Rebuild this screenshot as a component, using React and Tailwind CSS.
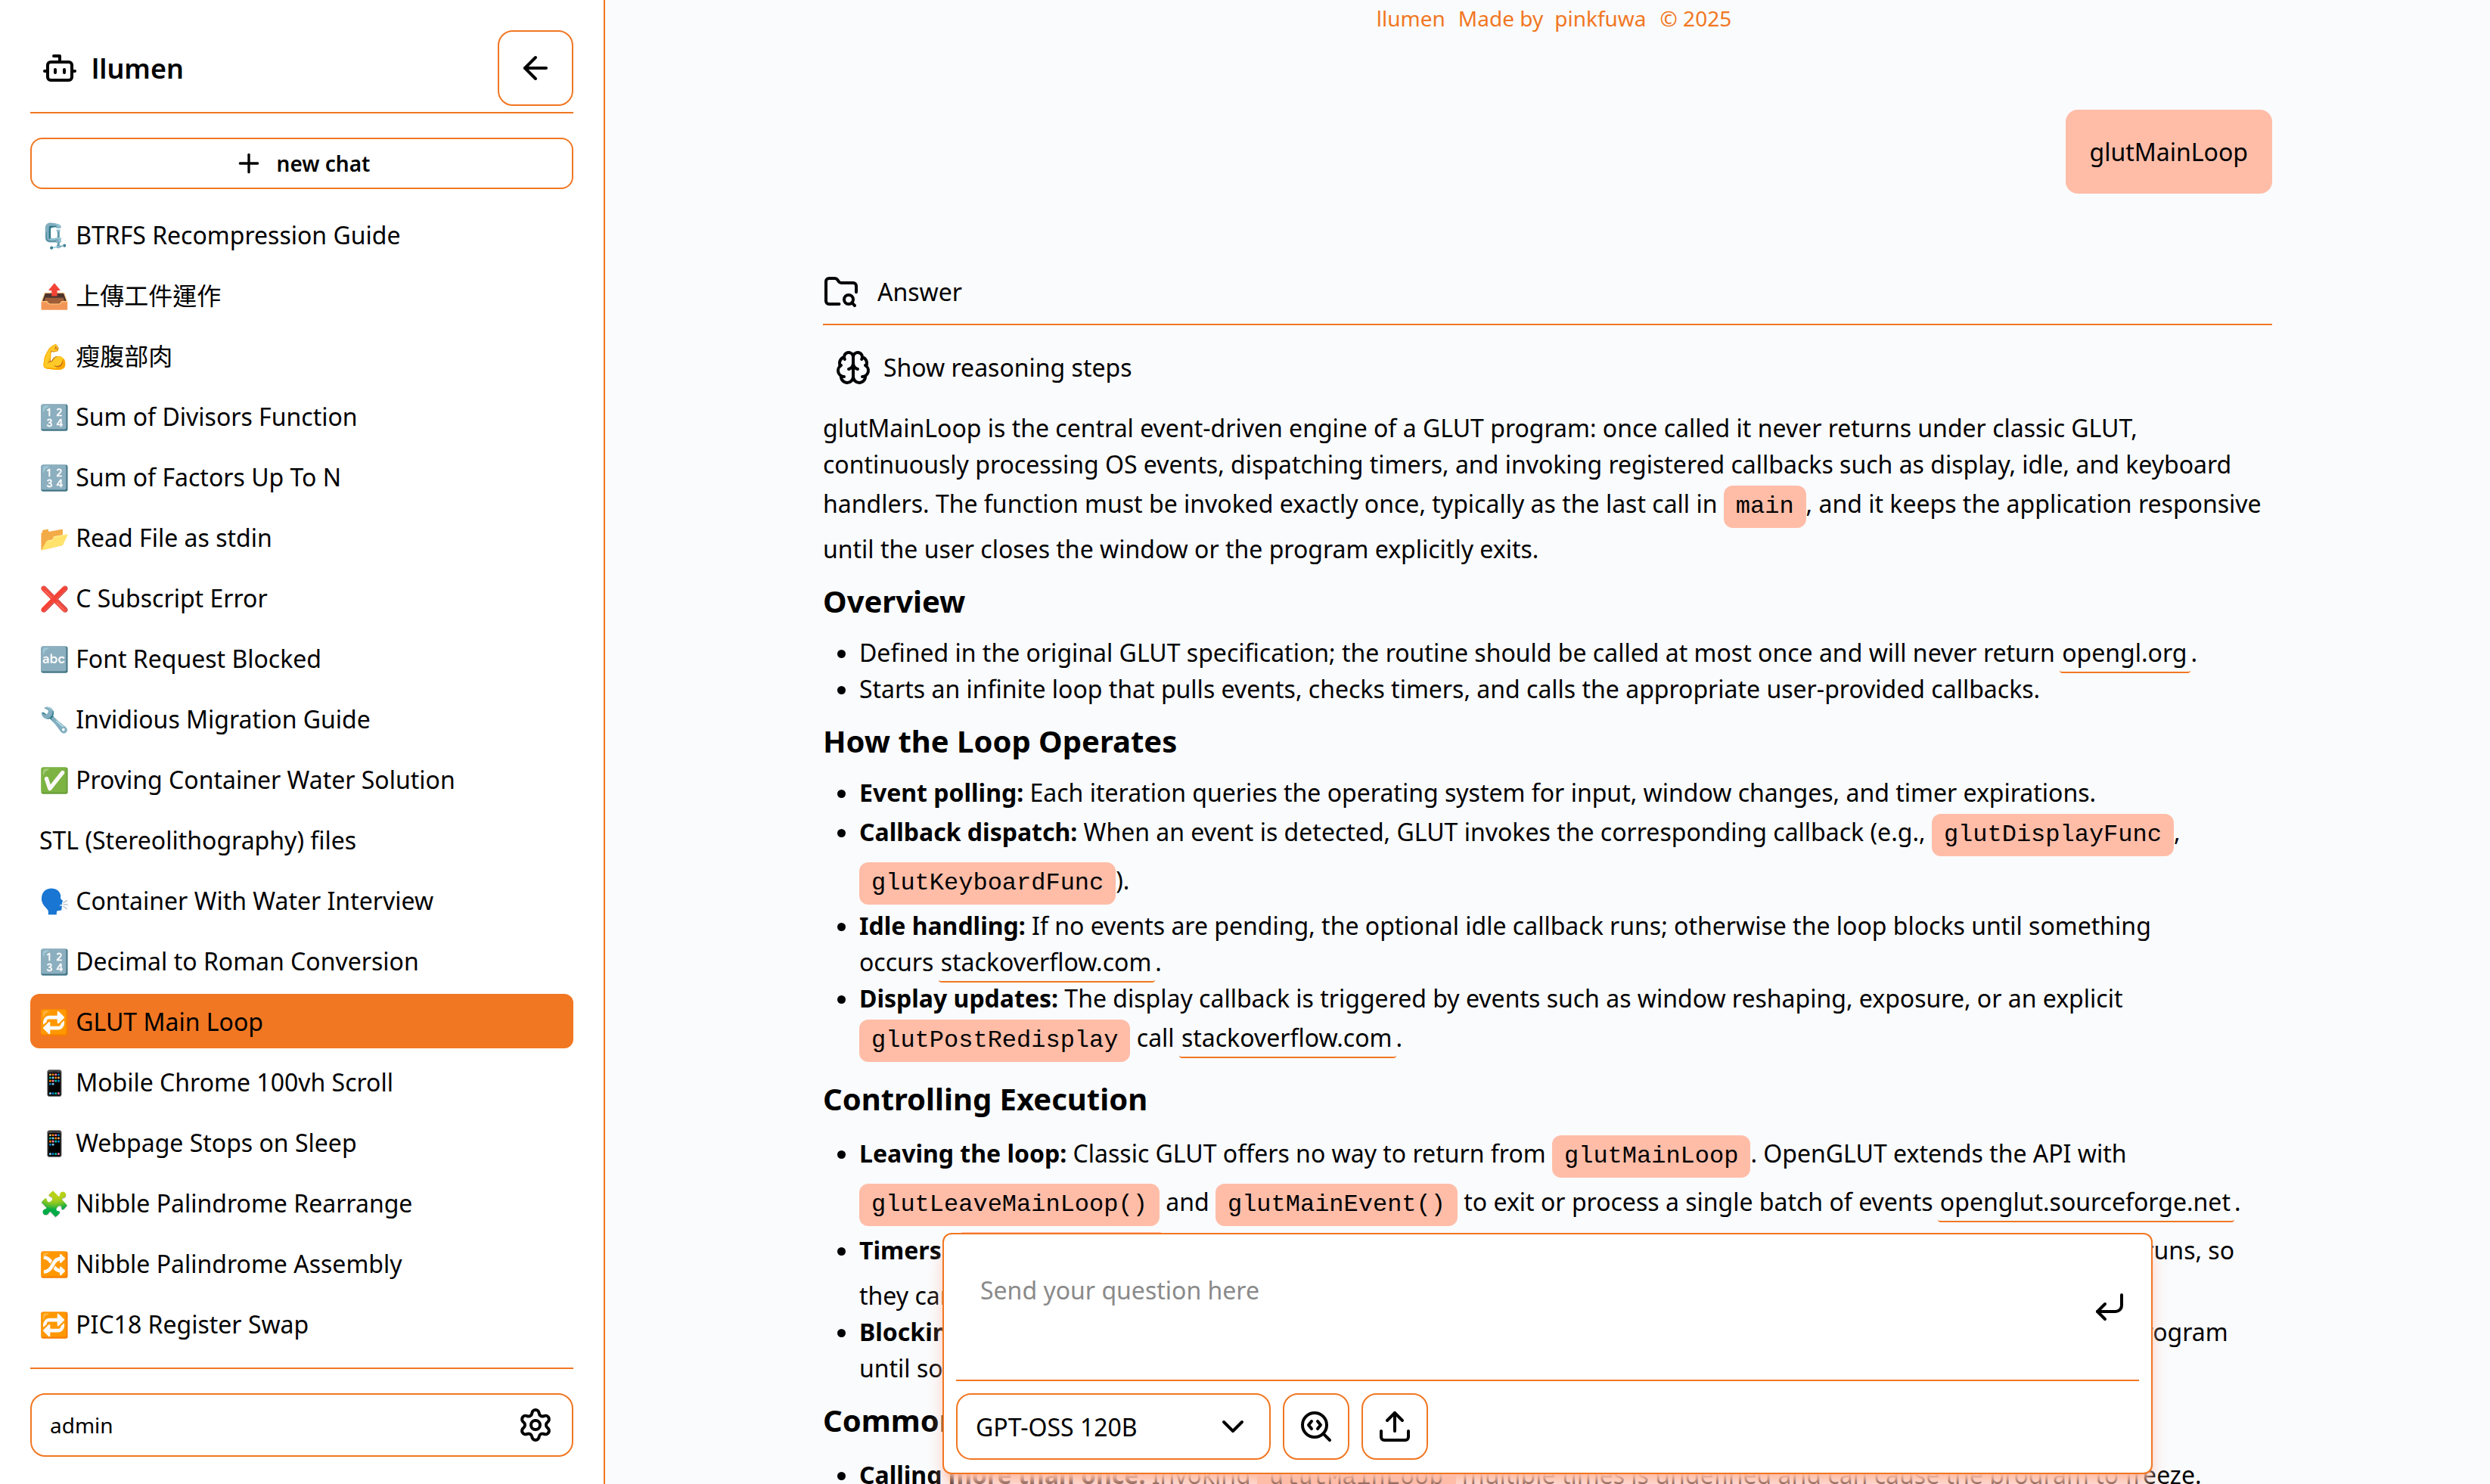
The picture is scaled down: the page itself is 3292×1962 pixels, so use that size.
import React from "react";
import { Bot, ArrowLeft, Plus, Settings, FolderSearch, Brain, CornerDownLeft, ChevronDown, SearchCode, Upload } from "lucide-react";

const chats = [
  ["🗜️", "BTRFS Recompression Guide"],
  ["📤", "上傳工件運作"],
  ["💪", "瘦腹部肉"],
  ["🔢", "Sum of Divisors Function"],
  ["🔢", "Sum of Factors Up To N"],
  ["📂", "Read File as stdin"],
  ["❌", "C Subscript Error"],
  ["🔤", "Font Request Blocked"],
  ["🔧", "Invidious Migration Guide"],
  ["✅", "Proving Container Water Solution"],
  ["", "STL (Stereolithography) files"],
  ["🗣️", "Container With Water Interview"],
  ["🔢", "Decimal to Roman Conversion"],
  ["🔁", "GLUT Main Loop", true],
  ["📱", "Mobile Chrome 100vh Scroll"],
  ["📱", "Webpage Stops on Sleep"],
  ["🧩", "Nibble Palindrome Rearrange"],
  ["🔀", "Nibble Palindrome Assembly"],
  ["🔁", "PIC18 Register Swap"],
];

function Code({ children }) {
  return <code className="my-1 inline-block rounded-xl bg-[#ffbda8] px-4 py-1 font-['Liberation_Mono',monospace] text-[32px] leading-[48px]">{children}</code>;
}
function Link({ children }) {
  return <a className="-ml-[2px] rounded-b-sm border-b-2 border-[#f17722] pb-1 pl-[3px] pr-[5px]">{children}</a>;
}
function H({ children }) {
  return <h2 className="mt-[15px] mb-[14px] text-[40px] leading-[60px] font-bold">{children}</h2>;
}
function B({ children }) {
  return <strong className="font-bold">{children}</strong>;
}

export default function App() {
  return (
    <div className="flex h-[1962px] w-[3292px] overflow-hidden bg-[#fafbfd] text-[32px] leading-[48px] text-black font-['Noto_Sans','Noto_Sans_CJK_TC','Noto_Color_Emoji',sans-serif]">
      <aside className="flex w-[800px] shrink-0 flex-col border-r-2 border-[#f17722] bg-white px-10 pt-10">
        <div className="flex h-[110px] shrink-0 items-start justify-between border-b-2 border-[#f17722]">
          <div className="flex h-[100px] items-center gap-[18px] pl-[15px]">
            <Bot size={48} />
            <span className="pt-[1px] text-[36px] font-semibold">llumen</span>
          </div>
          <button className="flex size-[100px] items-center justify-center rounded-[20px] border-2 border-[#f17722]">
            <ArrowLeft size={48} />
          </button>
        </div>
        <button className="mt-8 flex h-[68px] shrink-0 items-center justify-center gap-[17px] rounded-2xl border-2 border-[#f17722] text-[28px] font-semibold">
          <Plus size={40} />
          <span>new chat</span>
        </button>
        <ul className="mt-6 flex flex-1 flex-col gap-2">
          {chats.map(([e, t, a], i) => (
            <li key={i} className={"flex h-[72px] items-center rounded-xl px-3 pt-[2px] whitespace-pre " + (a ? "bg-[#f17722]" : "")}>
              {e ? e + " " : ""}{t}
            </li>
          ))}
        </ul>
        <div className="mb-[36px] border-t-2 border-[#f17722] pt-8">
          <div className="flex h-[84px] items-center justify-between rounded-[20px] border-2 border-[#f17722] pl-6 pr-6 text-[28px]">
            <span>admin</span>
            <Settings size={48} />
          </div>
        </div>
      </aside>
      <main className="relative min-w-0 flex-1">
        <p className="flex h-[48px] justify-center pl-[17px] pt-1 text-[28px] leading-[40px] text-[#f17722]">
          <span>llumen</span>
          <span className="ml-[17px]">Made by</span>
          <span className="ml-[15px]">pinkfuwa</span>
          <span className="ml-[18px]">© 2025</span>
        </p>
        <div className="mx-auto w-[1916px]">
          <div className="mt-[97px] flex justify-end">
            <div className="flex h-[111px] items-center rounded-2xl bg-[#ffbda8] px-8">glutMainLoop</div>
          </div>
          <div className="mt-[88px] flex h-[86px] items-center gap-6 border-b-2 border-[#f17722]">
            <FolderSearch size={48} />
            <span>Answer</span>
          </div>
          <div className="flex h-[112px] items-center gap-4 pl-4">
            <Brain size={48} />
            <span>Show reasoning steps</span>
          </div>
          <p>glutMainLoop is the central event-driven engine of a GLUT program: once called it never returns under classic GLUT, continuously processing OS events, dispatching timers, and invoking registered callbacks such as display, idle, and keyboard handlers. The function must be invoked exactly once, typically as the last call in <Code>main</Code>, and it keeps the application responsive until the user closes the window or the program explicitly exits.</p>
          <H>Overview</H>
          <ul className="ml-12 list-disc">
            <li>Defined in the original GLUT specification; the routine should be called at most once and will never return <Link>opengl.org</Link>.</li>
            <li>Starts an infinite loop that pulls events, checks timers, and calls the appropriate user-provided callbacks.</li>
          </ul>
          <H>How the Loop Operates</H>
          <ul className="ml-12 list-disc">
            <li><B>Event polling:</B> Each iteration queries the operating system for input, window changes, and timer expirations.</li>
            <li><B>Callback dispatch:</B> When an event is detected, GLUT invokes the corresponding callback (e.g., <Code>glutDisplayFunc</Code>, <Code>glutKeyboardFunc</Code>).</li>
            <li><B>Idle handling:</B> If no events are pending, the optional idle callback runs; otherwise the loop blocks until something<br />occurs <Link>stackoverflow.com</Link>.</li>
            <li><B>Display updates:</B> The display callback is triggered by events such as window reshaping, exposure, or an explicit <Code>glutPostRedisplay</Code> call <Link>stackoverflow.com</Link>.</li>
          </ul>
          <H>Controlling Execution</H>
          <ul className="ml-12 list-disc">
            <li><B>Leaving the loop:</B> Classic GLUT offers no way to return from <Code>glutMainLoop</Code>. OpenGLUT extends the API with <Code>glutLeaveMainLoop()</Code> and <Code>glutMainEvent()</Code> to exit or process a single batch of events <Link>openglut.sourceforge.net</Link>.</li>
            <li><B>Timers:</B> <Code>glutTimerFunc</Code> callbacks are always dispatched from inside the main event loop and only fire while it runs, so<br />they cannot be relied on once the loop has been left.</li>
            <li><B>Blocking:</B> Any long-running or otherwise blocking callback stalls all event and window processing for the whole program<br />until something returns control to the loop.</li>
          </ul>
          <H>Common Pitfalls</H>
          <ul className="ml-12 list-disc">
            <li><B>Calling more than once:</B> Invoking <Code>glutMainLoop</Code> multiple times is undefined and can cause the program to freeze.</li>
          </ul>
        </div>
        <div className="absolute left-[446px] top-[1630px] h-[319px] w-[1600px] rounded-xl border-2 border-[#f17722] bg-white px-4 shadow-xl shadow-[#ffbda8]">
          <div className="relative h-[194px] border-b-2 border-[#f17722] pl-8 pt-[50px] text-[#8a8a8a]">
            Send your question here
            <CornerDownLeft className="absolute right-[15px] top-[72px] text-black" size={48} />
          </div>
          <div className="mt-4 flex gap-4">
            <div className="flex h-[88px] w-[416px] items-center justify-between rounded-[20px] border-2 border-[#f17722] pl-6 pr-6">
              <span className="pt-[2px]">GPT-OSS 120B</span>
              <ChevronDown size={48} />
            </div>
            <button className="flex size-[88px] items-center justify-center rounded-[20px] border-2 border-[#f17722]"><SearchCode size={48} /></button>
            <button className="flex size-[88px] items-center justify-center rounded-[20px] border-2 border-[#f17722]"><Upload size={48} /></button>
          </div>
        </div>
      </main>
    </div>
  );
}
